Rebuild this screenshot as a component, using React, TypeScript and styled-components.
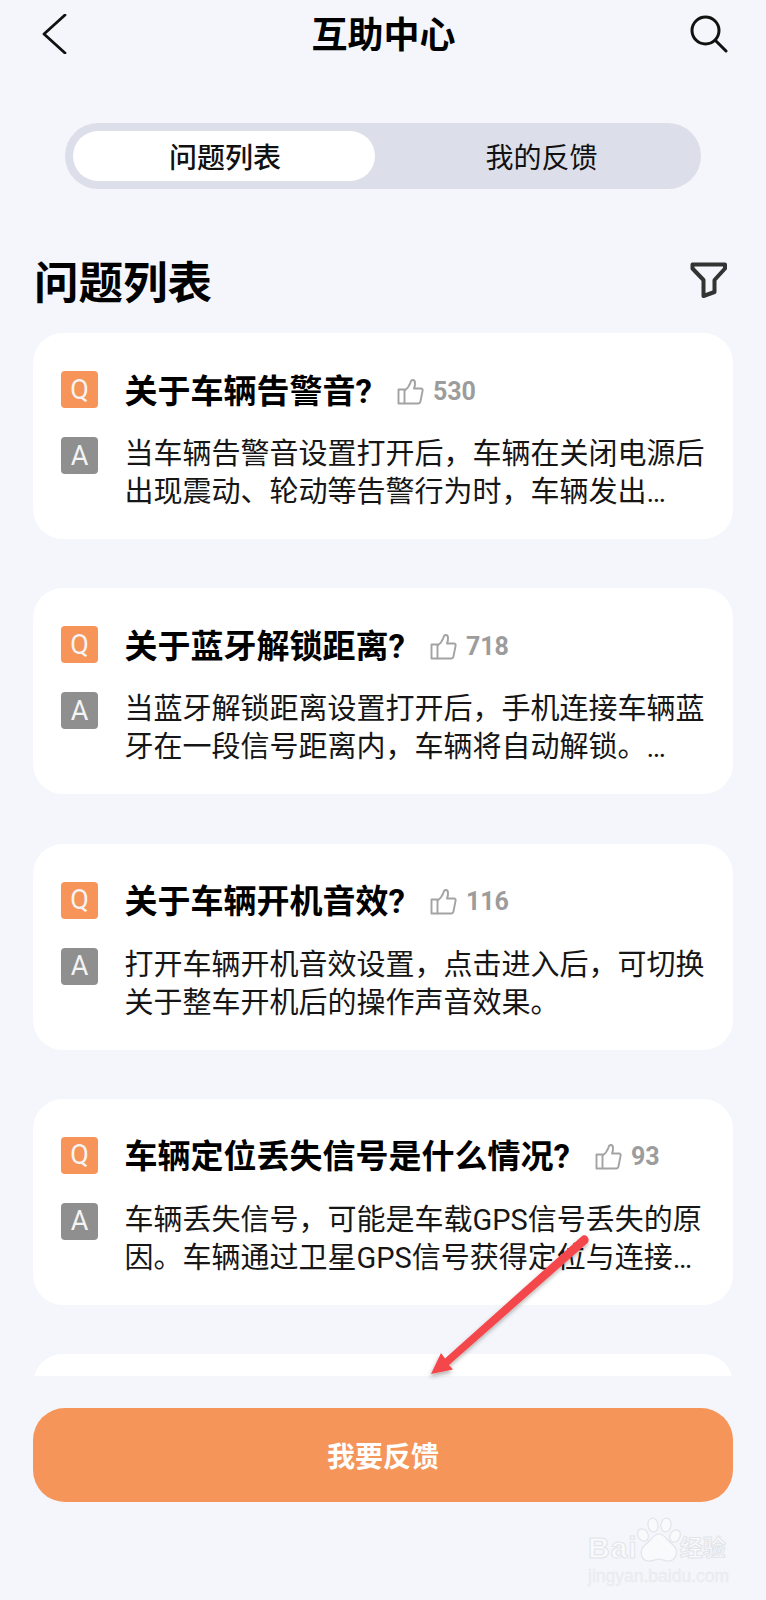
import styled, { createGlobalStyle } from "styled-components";

const GlobalStyle = createGlobalStyle`
  html, body {
    margin: 0;
    padding: 0;
    background: #f4f6fb;
  }
  * {
    box-sizing: border-box;
  }
`;

const Page = styled.div`
  position: relative;
  width: 766px;
  height: 1600px;
  display: flex;
  flex-direction: column;
  overflow: hidden;
  background: #f4f6fb;
  color: #000;
  font-family: Roboto, "Noto Sans CJK SC", sans-serif;
`;

const NavBar = styled.header`
  height: 67px;
  padding: 0 38px 0 39px;
  display: grid;
  grid-template-columns: 1fr auto 1fr;
  align-items: center;
`;

const NavTitle = styled.h1`
  margin: 4px 0 0;
  font-size: 36px;
  line-height: 44px;
  font-weight: 700;
`;

const IconSlot = styled.div<{ $end?: boolean }>`
  display: flex;
  justify-content: ${(p) => (p.$end ? "flex-end" : "flex-start")};
`;

const Segment = styled.div`
  margin: 56px 65px 0;
  height: 66px;
  padding: 8px 0 8px 8px;
  display: flex;
  border-radius: 33px;
  background: #dcdee9;
`;

const SegmentItem = styled.div<{ $active?: boolean }>`
  flex: ${(p) => (p.$active ? "0 0 302px" : "1")};
  display: flex;
  align-items: center;
  justify-content: center;
  padding-left: ${(p) => (p.$active ? "2px" : "7px")};
  border-radius: 25px;
  background: ${(p) => (p.$active ? "#fff" : "transparent")};
  font-size: 28px;
  font-weight: ${(p) => (p.$active ? 500 : 400)};
  color: #111;
`;

const SectionHead = styled.div`
  margin-top: 63px;
  height: 60px;
  padding: 0 38px 0 34px;
  display: flex;
  align-items: center;
  justify-content: space-between;
`;

const SectionTitle = styled.h2`
  margin: 3px 0 0;
  font-size: 44.5px;
  line-height: 60px;
  font-weight: 700;
`;

const List = styled.div`
  margin-top: 21px;
  height: 1043px;
  padding: 0 33px;
  display: flex;
  flex-direction: column;
  gap: 49.3px;
  overflow: hidden;
`;

const Card = styled.article`
  flex: 0 0 206px;
  padding: 38px 24px 0 28px;
  display: grid;
  grid-template-columns: 37px 1fr;
  grid-auto-rows: min-content;
  column-gap: 26.5px;
  border-radius: 30px;
  background: #fff;
`;

const Badge = styled.span<{ $kind: "q" | "a" }>`
  width: 37px;
  height: 37px;
  margin-top: ${(p) => (p.$kind === "a" ? "29px" : "0")};
  display: flex;
  align-items: center;
  justify-content: center;
  border-radius: 4px;
  background: ${(p) => (p.$kind === "q" ? "#f69459" : "#8f8f90")};
  color: #f4f4f4;
  font-size: 27px;
  font-weight: 400;
`;

const QuestionRow = styled.div`
  height: 37px;
  padding-top: 3px;
  display: flex;
  align-items: center;
`;

const Question = styled.h3`
  margin: 0;
  font-size: 33px;
  font-weight: 700;
  line-height: 37px;
  white-space: nowrap;
`;

const Likes = styled.span`
  margin-left: 25px;
  display: flex;
  align-items: center;
  gap: 9px;
  font-size: 25px;
  font-weight: 700;
  color: #9c9c9c;
`;

const Answer = styled.p`
  margin: 27px 0 0;
  font-size: 29px;
  line-height: 38px;
  color: #161616;
`;

const SubmitButton = styled.button`
  margin: 32px 33px 0;
  height: 94px;
  border: 0;
  border-radius: 32px;
  background: #f5955a;
  color: #fff;
  font-family: inherit;
  font-size: 28px;
  font-weight: 700;
`;

const Annotation = styled.svg`
  position: absolute;
  left: 0;
  top: 0;
  pointer-events: none;
`;

const Watermark = styled.div`
  position: absolute;
  left: 588px;
  top: 1515px;
  width: 140px;
  height: 68px;
  color: #f9fafc;
  -webkit-text-stroke: 1px #e2e4e9;
  font-family: "Liberation Sans", "Noto Sans CJK SC", sans-serif;
`;

const WatermarkRow = styled.div`
  height: 48px;
  padding-top: 18px;
  display: flex;
  align-items: center;
`;

const WatermarkBrand = styled.span`
  font-size: 30px;
  font-weight: 700;
  letter-spacing: 1px;
  line-height: 30px;
`;

const WatermarkDu = styled.span`
  margin-left: 9px;
  width: 33px;
  font-size: 17px;
  font-weight: 700;
  line-height: 30px;
  padding-top: 5px;
`;

const WatermarkCn = styled.span`
  font-size: 23px;
  font-weight: 700;
  line-height: 30px;
`;

const WatermarkUrl = styled.div`
  margin-top: 4px;
  font-size: 17.5px;
  line-height: 18px;
  white-space: nowrap;
  color: #eceef2;
  -webkit-text-stroke: 0.3px #e6e8ed;
`;

const Paw = styled.div`
  position: absolute;
  left: 48px;
  top: 2px;
  line-height: 0;
`;

const BackIcon = () => (
  <svg width="40" height="40" viewBox="0 0 40 40" fill="none">
    <path d="M26 1 L5 20 L26 39" stroke="#111" strokeWidth="2.8" strokeLinecap="round" strokeLinejoin="round" />
  </svg>
);

const SearchIcon = () => (
  <svg width="40" height="40" viewBox="0 0 40 40" fill="none" stroke="#111" strokeWidth="3" strokeLinecap="round">
    <circle cx="17.5" cy="16.5" r="13.5" />
    <path d="M28 27 L38 37" />
  </svg>
);

const FilterIcon = () => (
  <svg width="40" height="40" viewBox="0 0 40 40" fill="none" stroke="#333" strokeWidth="4" strokeLinejoin="round">
    <path d="M4.5 2.5 H37 V6.5 L26.5 18 V30 L15.5 34 V18 L4.5 6.5 Z" />
  </svg>
);

const ThumbIcon = () => (
  <svg width="27" height="27" viewBox="0 0 27 27" fill="none" stroke="#a3a3a3" strokeWidth="1.9" strokeLinejoin="round">
    <path d="M1.5 11.5 H7.5 V25.5 H1.5 Z" />
    <path d="M7.5 12.5 C10.5 10.5 12.5 7.5 13.5 4.5 C14 1.5 17.5 1 18 4.5 C18.3 7 17.5 9.2 17 10.5 H24 C25.2 10.5 25.9 11.5 25.6 12.6 L23.4 23.8 C23.2 24.9 22.4 25.5 21.4 25.5 H7.5" />
  </svg>
);

const PawIcon = () => (
  <svg width="46" height="46" viewBox="0 0 46 46" fill="#f9fafc" stroke="#e2e4e9" strokeWidth="1.2">
    <ellipse cx="7" cy="18" rx="5" ry="6.5" transform="rotate(-30 7 18)" />
    <ellipse cx="17" cy="8" rx="5" ry="7" transform="rotate(-8 17 8)" />
    <ellipse cx="30" cy="8" rx="5" ry="7" transform="rotate(8 30 8)" />
    <ellipse cx="39" cy="19" rx="5" ry="6.5" transform="rotate(30 39 19)" />
    <path d="M23 17 C29 17 31 24 37 28 C43 33 41 44 32 44 C27 44 26 42 23 42 C20 42 18 44 13 44 C4 44 3 33 9 28 C15 24 17 17 23 17 Z" />
  </svg>
);

const questions = [
  {
    title: "关于车辆告警音?",
    likes: 530,
    answer: "当车辆告警音设置打开后，车辆在关闭电源后出现震动、轮动等告警行为时，车辆发出…",
  },
  {
    title: "关于蓝牙解锁距离?",
    likes: 718,
    answer: "当蓝牙解锁距离设置打开后，手机连接车辆蓝牙在一段信号距离内，车辆将自动解锁。…",
  },
  {
    title: "关于车辆开机音效?",
    likes: 116,
    answer: "打开车辆开机音效设置，点击进入后，可切换关于整车开机后的操作声音效果。",
  },
  {
    title: "车辆定位丢失信号是什么情况?",
    likes: 93,
    answer: "车辆丢失信号，可能是车载GPS信号丢失的原因。车辆通过卫星GPS信号获得定位与连接…",
  },
];

const App = () => {
  return (
    <Page>
      <GlobalStyle />
      <NavBar>
        <IconSlot>
          <BackIcon />
        </IconSlot>
        <NavTitle>互助中心</NavTitle>
        <IconSlot $end>
          <SearchIcon />
        </IconSlot>
      </NavBar>

      <Segment>
        <SegmentItem $active>问题列表</SegmentItem>
        <SegmentItem>我的反馈</SegmentItem>
      </Segment>

      <SectionHead>
        <SectionTitle>问题列表</SectionTitle>
        <FilterIcon />
      </SectionHead>

      <List>
        {questions.map((q) => (
          <Card key={q.title}>
            <Badge $kind="q">Q</Badge>
            <QuestionRow>
              <Question>{q.title}</Question>
              <Likes>
                <ThumbIcon />
                {q.likes}
              </Likes>
            </QuestionRow>
            <Badge $kind="a">A</Badge>
            <Answer>{q.answer}</Answer>
          </Card>
        ))}
        <Card />
      </List>

      <SubmitButton>我要反馈</SubmitButton>

      {/* 標註箭頭 */}
      <Annotation width="766" height="1600" viewBox="0 0 766 1600">
        <defs>
          <filter id="arrowShadow" x="-10%" y="-10%" width="120%" height="120%">
            <feDropShadow dx="-1" dy="3" stdDeviation="2" floodColor="#000" floodOpacity="0.3" />
          </filter>
        </defs>
        <path
          d="M581.5 1236.5 C584 1233.5 589.5 1236 588.5 1241 C588.3 1242 588 1242.5 587.5 1243 L449 1365 L453 1369.5 L431 1374 L441 1353 L445 1358.5 Z"
          fill="#f4474b"
          filter="url(#arrowShadow)"
        />
      </Annotation>

      <Watermark>
        <Paw>
          <PawIcon />
        </Paw>
        <WatermarkRow>
          <WatermarkBrand>Bai</WatermarkBrand>
          <WatermarkDu>du</WatermarkDu>
          <WatermarkCn>经验</WatermarkCn>
        </WatermarkRow>
        <WatermarkUrl>jingyan.baidu.com</WatermarkUrl>
      </Watermark>
    </Page>
  );
};

export default App;
